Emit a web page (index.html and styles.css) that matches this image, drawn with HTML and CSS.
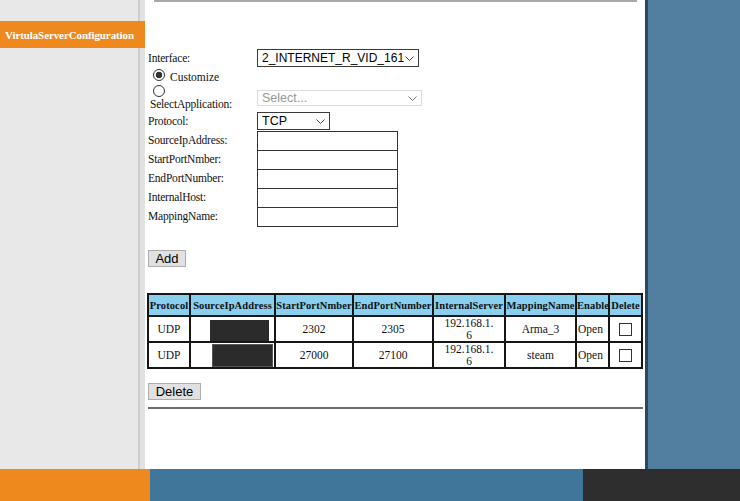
FILE: index.html
```html
<!DOCTYPE html>
<html lang="en">
<head>
  <meta charset="UTF-8">
  <title>Virtual Server Configuration</title>
  <link rel="stylesheet" href="styles.css">
</head>
<body>

<div class="page">
  <aside class="sidebar">
    <div class="menu-item">VirtulaServerConfiguration</div>
  </aside>

  <main class="content">
    <div class="top-rule"></div>

    <form class="config">
      <div class="row row-iface">
        <label>Interface:</label>
        <select class="sel sel-iface">
          <option>2_INTERNET_R_VID_161</option>
        </select>
      </div>

      <div class="row row-custom">
        <input type="radio" name="mode" checked>
        <span class="radio-text">Customize</span>
      </div>

      <div class="row row-app">
        <div class="app-left">
          <input type="radio" name="mode">
          <label>SelectApplication:</label>
        </div>
        <select class="sel sel-app" disabled>
          <option>Select...</option>
        </select>
      </div>

      <div class="row row-proto">
        <label>Protocol:</label>
        <select class="sel sel-proto">
          <option>TCP</option>
          <option>UDP</option>
        </select>
      </div>

      <div class="row row-input"><label>SourceIpAddress:</label><input type="text"></div>
      <div class="row row-input"><label>StartPortNmber:</label><input type="text"></div>
      <div class="row row-input"><label>EndPortNumber:</label><input type="text"></div>
      <div class="row row-input"><label>InternalHost:</label><input type="text"></div>
      <div class="row row-input"><label>MappingName:</label><input type="text"></div>

      <button type="button" class="btn btn-add">Add</button>
    </form>

    <table class="rules">
      <colgroup>
        <col class="c-proto"><col class="c-src"><col class="c-start"><col class="c-end">
        <col class="c-host"><col class="c-name"><col class="c-enable"><col class="c-del">
      </colgroup>
      <tr class="head">
        <th>Protocol</th>
        <th>SourceIpAddress</th>
        <th>StartPortNmber</th>
        <th>EndPortNumber</th>
        <th>InternalServer</th>
        <th>MappingName</th>
        <th>Enable</th>
        <th>Delete</th>
      </tr>
      <tr>
        <td>UDP</td>
        <td class="src"><span class="hidden-ip first"></span></td>
        <td>2302</td>
        <td>2305</td>
        <td class="host">192.168.1.<br>6</td>
        <td>Arma_3</td>
        <td class="state">Open</td>
        <td><input type="checkbox"></td>
      </tr>
      <tr>
        <td>UDP</td>
        <td class="src"><span class="hidden-ip second"></span></td>
        <td>27000</td>
        <td>27100</td>
        <td class="host">192.168.1.<br>6</td>
        <td>steam</td>
        <td class="state">Open</td>
        <td><input type="checkbox"></td>
      </tr>
    </table>

    <button type="button" class="btn btn-delete">Delete</button>
    <div class="bottom-rule"></div>
  </main>

  <div class="side-right"></div>
</div>

<footer class="footer">
  <div class="f-orange"></div>
  <div class="f-blue"></div>
  <div class="f-dark"></div>
</footer>

</body>
</html>
```

FILE: styles.css
```css
body {
  margin: 0;
  height: 501px;
  overflow: hidden;
  display: flex;
  flex-direction: column;
  font-family: "Liberation Serif", serif;
  font-size: 11.5px;
  color: #111;
}

.page {
  display: flex;
  height: 469px;
}

.sidebar {
  width: 145px;
  padding-top: 21px;
  box-sizing: border-box;
  background: linear-gradient(to right, #e8e8e8 0 138px, #cdcdcd 138px 140px, #e2e2e2 140px 145px);
}

.menu-item {
  height: 27px;
  line-height: 28px;
  padding-left: 5px;
  background-color: #ef891e;
  color: #fff;
  font-weight: bold;
  font-size: 11px;
  letter-spacing: -0.1px;
}

.content {
  width: 500px;
  padding-left: 3px;
  box-sizing: border-box;
  background-color: #fff;
}

.top-rule {
  margin-left: 6px;
  width: 483px;
  height: 2px;
  background-color: #a9a9a9;
}

.config {
  margin: 0;
  padding-top: 47px;
}

.row {
  display: flex;
  align-items: flex-start;
}

.row label {
  width: 109px;
  flex-shrink: 0;
  letter-spacing: -0.2px;
}

.sel {
  appearance: none;
  -webkit-appearance: none;
  margin: 0;
  padding: 0 10px 0 4px;
  box-sizing: border-box;
  border: 1px solid #3a3a3a;
  border-radius: 0;
  font-family: "Liberation Sans", Arial, sans-serif;
  font-size: 12.5px;
  color: #000;
  background: #fff url("data:image/svg+xml;utf8,<svg xmlns='http://www.w3.org/2000/svg' width='9' height='5'><path d='M0.5 0.5 L4.5 4.5 L8.5 0.5' fill='none' stroke='%23444' stroke-width='1'/></svg>") no-repeat right 4px center;
}

.row-iface {
  height: 20px;
}

.row-iface label {
  line-height: 18px;
}

.sel-iface {
  width: 162px;
  height: 18px;
  font-size: 12px;
}

.row-custom {
  height: 15px;
  padding-left: 5px;
}

input[type="radio"] {
  appearance: none;
  -webkit-appearance: none;
  margin: 0;
  width: 12px;
  height: 12px;
  border: 1px solid #333;
  border-radius: 50%;
  background-color: #fff;
  box-sizing: border-box;
}

input[type="radio"]:checked {
  background: radial-gradient(circle, #333 0 3px, #fff 3.6px);
}

.radio-text {
  margin-left: 5px;
  line-height: 16px;
}

.row-app {
  height: 27px;
}

.app-left {
  width: 109px;
  flex-shrink: 0;
}

.app-left input {
  display: block;
  margin: 1px 0 0 5px;
}

.app-left label {
  display: block;
  padding-left: 2px;
  line-height: 14px;
}

.sel-app {
  width: 165px;
  height: 16px;
  margin-top: 6px;
  border-color: #cdcdcd;
  color: #6d6d6d;
  background-color: #fff;
}

.row-proto {
  height: 20px;
}

.row-proto label {
  line-height: 20px;
}

.sel-proto {
  width: 73px;
  height: 18px;
  margin-top: 1px;
  padding-right: 18px;
}

.row-input {
  height: 19px;
}

.row-input label {
  line-height: 19px;
}

.row-input input {
  width: 141px;
  height: 20px;
  margin: 0 0 -1px 0;
  padding: 0 2px;
  box-sizing: border-box;
  border: 1px solid #333;
  border-radius: 0;
}

.btn {
  display: block;
  height: 17px;
  padding: 0;
  box-sizing: border-box;
  border: 1px solid #adadad;
  border-radius: 0;
  background-color: #e1e1e1;
  font-family: "Liberation Sans", Arial, sans-serif;
  font-size: 13px;
  line-height: 15px;
  color: #000;
}

.btn-add {
  width: 38px;
  margin-top: 24px;
}

.rules {
  margin: 26px 0 0 -1px;
  width: 494px;
  table-layout: fixed;
  border-collapse: collapse;
}

.c-proto { width: 42px; }
.c-src { width: 85px; }
.c-start { width: 78px; }
.c-end { width: 80px; }
.c-host { width: 72px; }
.c-name { width: 71px; }
.c-enable { width: 33px; }
.c-del { width: 33px; }

.rules th,
.rules td {
  border: 2px solid #161616;
  padding: 0;
  text-align: center;
  white-space: nowrap;
  overflow: visible;
}

.rules .head {
  height: 22px;
}

.rules th {
  background-color: #89cff0;
  font-weight: bold;
  font-size: 10.5px;
  letter-spacing: 0.1px;
}

.rules tr {
  height: 26px;
}

.rules .host {
  line-height: 12px;
}

.rules .state {
  text-align: left;
  padding-left: 1px;
}

.rules .src {
  text-align: left;
}

.hidden-ip {
  display: block;
  width: 59px;
  height: 21px;
  background-color: #2b2b2b;
}

.hidden-ip.first {
  margin: 2px 0 0 19px;
}

.hidden-ip.second {
  margin: 1px 0 0 22px;
  box-shadow: 0 0 0 1px #555;
}

input[type="checkbox"] {
  appearance: none;
  -webkit-appearance: none;
  display: block;
  margin: 0 auto;
  width: 13px;
  height: 13px;
  border: 1px solid #333;
  border-radius: 0;
  background-color: #fff;
}

.btn-delete {
  width: 53px;
  margin-top: 14px;
}

.bottom-rule {
  margin-top: 7px;
  width: 495px;
  height: 2px;
  background-color: #6e6e6e;
}

.side-right {
  flex: 1;
  background-color: #527fa0;
  border-left: 3px solid #29485c;
}

.footer {
  display: flex;
  height: 32px;
}

.f-orange {
  width: 150px;
  background-color: #ee8a1d;
}

.f-blue {
  width: 433px;
  background-color: #41769b;
}

.f-dark {
  flex: 1;
  background-color: #2e2e2e;
}
```
